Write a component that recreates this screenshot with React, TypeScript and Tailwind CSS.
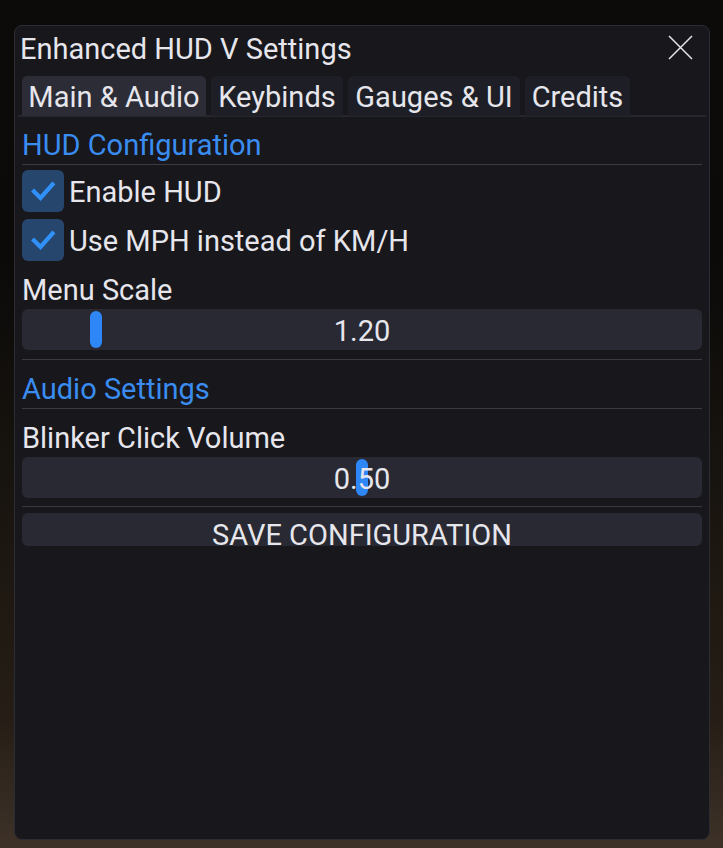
const tabs = [
  { label: "Main & Audio", width: "w-[184px]", active: true },
  { label: "Keybinds", width: "w-[132px]", active: false },
  { label: "Gauges & UI", width: "w-[172px]", active: false },
  { label: "Credits", width: "w-[105px]", active: false },
];

function Check({ label }: { label: string }) {
  return (
    <div className="flex h-[42px] items-center gap-[5px]">
      <div className="flex h-[42px] w-[42px] items-center justify-center rounded-[6px] bg-[#27466d]">
        <svg width="28" height="28" viewBox="0 0 28 28" fill="none">
          <path d="M5 14.5 L11.5 21 L23.5 7.5" stroke="#3191fb" strokeWidth="4.2" strokeLinecap="square" />
        </svg>
      </div>
      <span className="pt-[4px]">{label}</span>
    </div>
  );
}

// ImGui style slider: grab sits under the centered value text
function Slider({ value, grabLeft }: { value: string; grabLeft: string }) {
  return (
    <div className="relative flex h-[41px] items-center justify-center rounded-[6px] bg-[#282932] pt-[4px]">
      <div className={`absolute top-[2px] h-[37px] w-[12px] rounded-full bg-[#2f86f6] ${grabLeft}`} />
      <span className="z-10">{value}</span>
    </div>
  );
}

function Heading({ text }: { text: string }) {
  return (
    <div className="flex h-[41px] items-center border-b border-[#3a3a42] pt-[4px] text-[#3a8cf0]">
      {text}
    </div>
  );
}

function Separator() {
  return <div className="h-px bg-[#3a3a42]" />;
}

export default function App() {
  return (
    <div className="h-[848px] w-[723px] overflow-hidden bg-[linear-gradient(to_bottom,#0c0b0a_0%,#0b0a09_30%,#17130e_55%,#261e16_85%,#3e3228_100%)] pl-[14px] pt-[25px] font-['Roboto',sans-serif] text-[29px] text-[#e6e6ec]">
      <div className="flex h-[815px] w-[696px] flex-col rounded-[8px] border border-[#2c2c34] bg-[#17171c] px-[7px]">
        <div className="flex h-[45px] items-center justify-between pt-[3px]">
          <span className="-ml-[2px]">Enhanced HUD V Settings</span>
          <svg width="25" height="25" viewBox="0 0 25 25" className="mb-[5px] mr-[9px]" fill="none">
            <path d="M1 1 L24 24 M24 1 L1 24" stroke="#e6e6ec" strokeWidth="1.5" />
          </svg>
        </div>

        <div className="-mx-[4px] mt-[5px] flex h-[41px] gap-[5px] border-b-2 border-[#25262e] px-[4px]">
          {tabs.map((tab) => (
            <div
              key={tab.label}
              className={`flex h-[40px] items-center justify-center rounded-t-[5px] pt-[4px] ${tab.width} ${
                tab.active ? "bg-[#2b2c36]" : "bg-[#1e1f26]"
              }`}
            >
              {tab.label}
            </div>
          ))}
        </div>

        <div className="mt-[7px] flex flex-col">
          <Heading text="HUD Configuration" />
          <div className="mt-[5px] flex flex-col gap-[7px]">
            <Check label="Enable HUD" />
            <Check label="Use MPH instead of KM/H" />
          </div>
          <div className="mt-[8px] flex h-[40px] items-center pt-[4px]">Menu Scale</div>
          <Slider value="1.20" grabLeft="left-[68px]" />
        </div>

        <div className="mt-[9px]">
          <Separator />
        </div>

        <div className="mt-[8px] flex flex-col">
          <Heading text="Audio Settings" />
          <div className="mt-[8px] flex h-[40px] items-center pt-[4px]">Blinker Click Volume</div>
          <Slider value="0.50" grabLeft="left-[334px]" />
        </div>

        <div className="mt-[8px]">
          <Separator />
        </div>

        <div className="mt-[6px] flex h-[33px] items-end justify-center rounded-[6px] bg-[#282932]">
          <span className="mb-[-4px] leading-[29px]">SAVE CONFIGURATION</span>
        </div>
      </div>
    </div>
  );
}
